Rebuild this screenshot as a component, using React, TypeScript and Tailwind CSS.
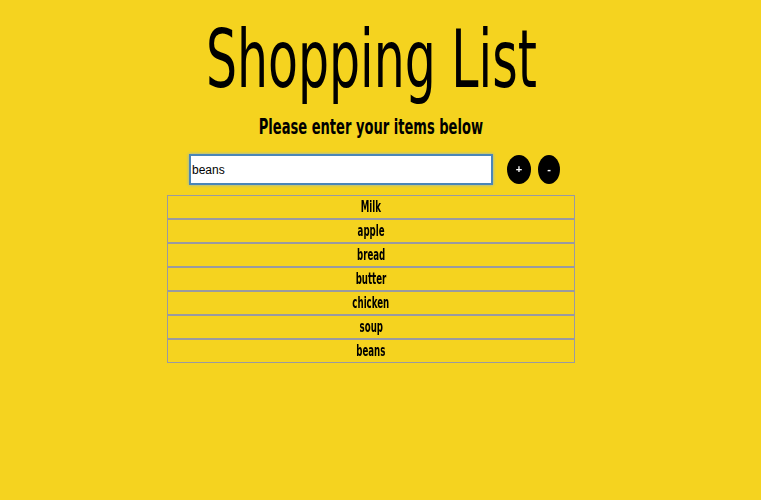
import React, { useState } from 'react';

const narrow = { fontFamily: "'DejaVu Sans Condensed', 'DejaVu Sans', sans-serif" };
const plain = { fontFamily: "'Liberation Sans', Arial, sans-serif" };

const App: React.FC = () => {
  const [items] = useState<string[]>(['Milk', 'apple', 'bread', 'butter', 'chicken', 'soup', 'beans']);
  const [value, setValue] = useState('beans');

  return (
    <div className="w-full min-h-[500px] bg-[#f5d31f] text-black" style={narrow}>
      <div className="ml-[167px] w-[408px] pt-[17px] flex flex-col items-center">
        <h1 className="whitespace-nowrap text-[80px] leading-[86px] scale-x-[0.68]">Shopping List</h1>
        <h2 className="whitespace-nowrap mt-[11px] text-[22px] leading-[26px] font-bold scale-x-[0.66]">Please enter your items below</h2>
        <div className="mt-[14px] flex items-center pl-[22px] w-full">
          <input
            value={value}
            onChange={e => setValue(e.target.value)}
            autoFocus
            className="w-[304px] h-[31px] bg-white border-2 border-[#4a86b8] shadow-[0_0_3px_#7fb0e0] px-[1px] text-[12px] text-black outline-none"
            style={plain}
          />
          <button className="ml-[14px] w-[24px] h-[29px] rounded-[50%] bg-black text-white text-[11px] font-bold flex items-center justify-center" style={plain}>+</button>
          <button className="ml-[7px] w-[22px] h-[29px] rounded-[50%] bg-black text-white text-[11px] font-bold flex items-center justify-center" style={plain}>-</button>
        </div>
        <ul className="mt-[10px] w-full">
          {items.map((item, i) => (
            <li key={i} className="h-[24px] border border-[#9a9aa0] flex items-center justify-center text-[15px] leading-none">
              <span className="scale-x-[0.64] font-bold whitespace-nowrap">{item}</span>
            </li>
          ))}
        </ul>
      </div>
    </div>
  );
};

export default App;
